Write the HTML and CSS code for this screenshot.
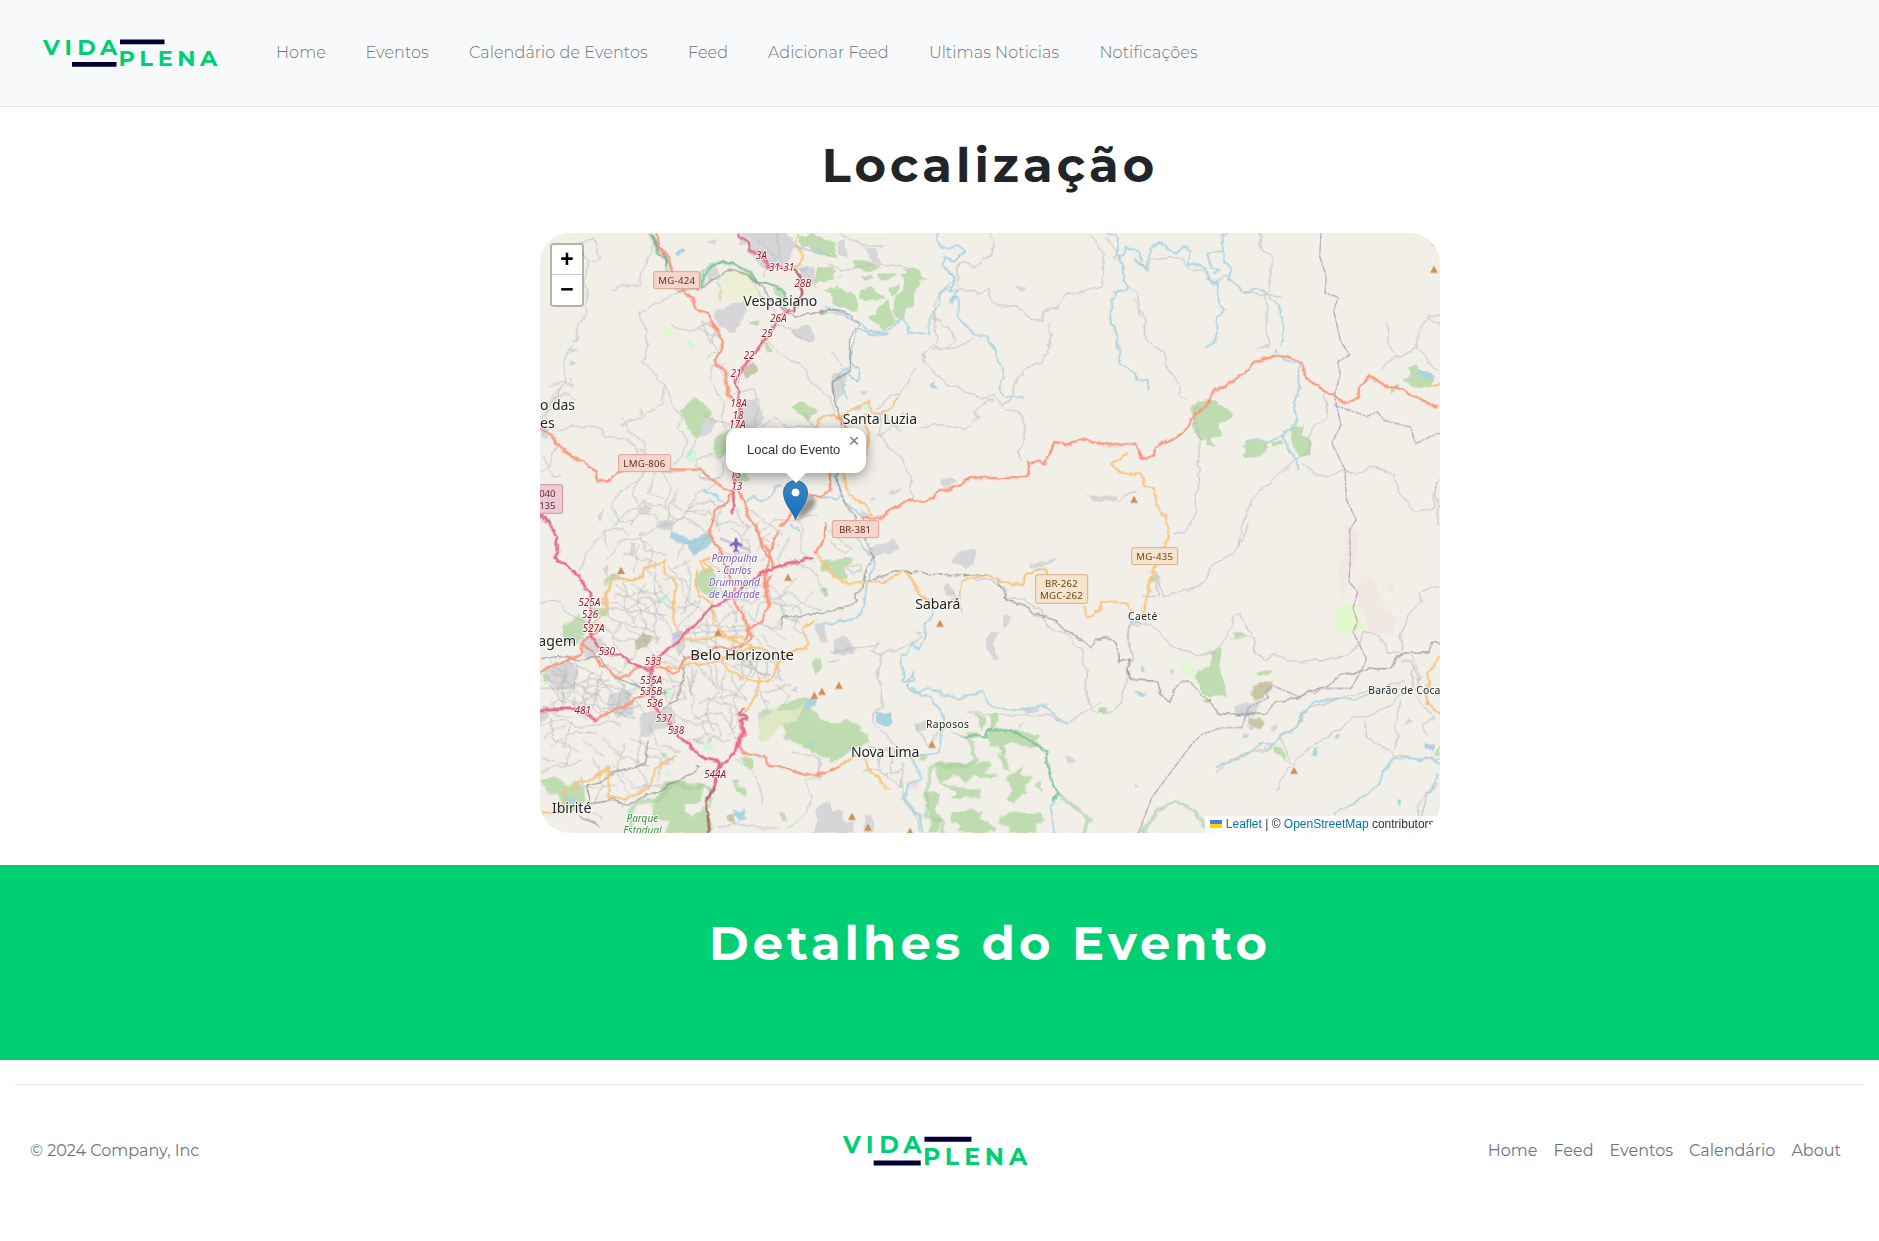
FILE: index.html
```html
<!DOCTYPE html>
<html lang="pt-BR">
<head>
<meta charset="utf-8">
<title>Vida Plena - Evento</title>
<link rel="stylesheet" href="styles.css">
</head>
<body>
<header class="topbar">
  <a class="brand" href="#" aria-label="Vida Plena">
    <svg class="logo" viewBox="0 0 175 28">
      <text y="16.3" x="0 21.5 34.2 57">VIDA</text>
      <text y="27.2" x="75.600 96.200 114.700 134.200 157">PLENA</text>
      <path d="M77 .5h44.500v4.700H77zM29 23h44.500v4.700H29z"/>
    </svg>
  </a>
  <nav class="menu">
    <a class="w-home" href="#">Home</a>
    <a class="w-eventos" href="#">Eventos</a>
    <a class="w-calendar" href="#">Calendário de Eventos</a>
    <a class="w-feed" href="#">Feed</a>
    <a class="w-add" href="#">Adicionar Feed</a>
    <a class="w-news" href="#">Ultimas Noticias</a>
    <a class="w-notif" href="#">Notificações</a>
  </nav>
</header>

<main>
  <section class="location">
    <h1 class="title title-location">Localização</h1>
    <div class="map">
      <svg class="tiles" viewBox="30 24 2700 1800">
        <defs>
          <symbol id="peak" viewBox="0 0 24 22"><path d="M12 0L24 22H0z" fill="#d08f55"/></symbol>
          <filter id="wiggle" filterUnits="userSpaceOnUse" x="0" y="0" width="2760" height="1850" color-interpolation-filters="sRGB">
            <feTurbulence type="fractalNoise" baseFrequency=".022" numOctaves="3" seed="4"/>
            <feDisplacementMap in="SourceGraphic" scale="26" xChannelSelector="R" yChannelSelector="G"/>
          </filter>
        </defs>
        <rect x="30" y="24" width="2700" height="1800" fill="#f2efe9"/>

        <g filter="url(#wiggle)">
        <!-- land use -->
        <g class="res">
          <path d="M640 24h130l20 30-8 40-40 40-60-20-30-50-30-5zM565 255l40-20 37-5-2 50-25 38-50-5-12-35zM533 140l25-14 4 26-16 26-14-10zM535 50l25-8-8 20zM780 310l50-5 25 30-10 15-55-25zM640 530l40-8 20 60-20 20 10 40-55-10-10-50zM505 600l40-25 12 20-20 35-30 6zM320 845l30-10 20 8-15 22-30-3zM206 860l12-12-4 45-12-10zM380 895l50-15v30l-40 12zM810 120l40 10 8 40-30 5-20-20zM40 600l25 10-10 30-20-4zM925 895v5l-20 5zM905 445l25 0 12 50-20 40-18-40z"/>
          <g transform="translate(900 0)"><path d="M20 440l40-10-10 22-10 50-18-20zM105 65l30 5 20 45-30-5zM20 55l24-12 10 55-25-5zM335 765l30-8 14 8-15 20-28-3zM760 802l20 8 20-2 30 2 30 6-4 10-40 0-20 4zM555 182l30 2-6 12-16 0zM90 855l40 15-35 18zM176 796l34-4v10l-34 6zM88 500l22-4-8 18zM120 816h14v8h-14zM70 545l24-10-2 18-18 8z"/></g>
          <g transform="translate(0 900)"><path d="M340 565l90-20 8 55-60 10-20 30-32-8 10-40zM240 505l60-5 12 65-50 20-32-30zM60 430l60-20 25 30-10 50-50 5-30-30zM150 340l70-5 10 30-50 40-30-30zM860 300l30-5v60l-25-5zM690 560l35-8 20 20-25 30-30-10zM300 55l18 0v35l-18 5zM690 530l24-6 4 16zM30 550l30-5-10 30-20 20zM860 850l40-20v94h-50zM780 490l25-10 5 20zM410 690l24 10-14 20-12-6zM430 340l30-10 10 40-30 30zM750 630l30 0-10 20zM215 130l20-8 0 40zM600 1500z"/></g>
          <g transform="translate(900 900)"><path d="M110 75l50-20 40-12 4 26-30 20-20 0-36 5zM365 100l35-25 32-5-2 40-16 24-14-18-34-2zM595 120l30-8 24 2 30-14-2 12-40 18-38-2zM343 185l12-15 15 20-2 30-26-12zM520 275l12-8 8 10-6 30-16 4zM470 350l20-30 18 0-16 34-4 24 18 20-20 6-14-26zM10 345l30-15 24 34 8 16-30 10-30-10zM250 595l40-12 2 38-40-2zM250 312l30 10-14 8zM711 698l12-4 18 12-10 10-18-6zM580 555l50-12-2 12-40 16zM565 605l14-8-4 16zM0 855l30 2 20 30 20-4 0 41h-70zM105 870l20 0 6 54h-28z"/></g>
          <g transform="translate(1815 900)"><path d="M300 540l40-12 28 2-4 40-20 6-48-6zM835 460l30-10-16 22zM102 436l16 0-4 16-12-6zM408 605l20-5-6 14-12 0zM820 570l12 20-20 6zM0 775l10 10-10 6z"/></g>
        </g>
        <g class="wood">
          <path d="M450 560l50-45 20 15 24 40-30 30-10 40-24-10-16-30zM800 24l25 14 20-14 30 10 40 20v40l-50-4-30-20-20 4zM776 548l36-20 50 28-22 28zM860 130l50-10v50l-40-6-20 20zM880 190l40-5v30zM658 295l16-8 20 6-10 8-20 0zM700 350l14 8 20 24-20 4zM560 640l25-20 20-8 0 60-36 30-20-30zM865 260l30-6 5 8-20 4zM330 552l8 12-10 6zM615 750l36-10 10 20-40 10z"/>
          <g transform="translate(900 0)"><path d="M65 110l50-4 36 20-24 12-60-4zM145 148l50 0-14 20-34-4zM215 130l40-4 36 35-20 0-10 36-10 60-20-4-16 32-28-20 14-56 20-18-16-40 26-4-8-10zM140 245l32-20 12 44 14 10-34 42-50-42 28-10zM90 190l40 0 36 34-40 0-18 4-26-14zM4 200l30-6 20 16 10-14 12 30 4 34-36-10-36-10zM0 58l20 16 0 30-20-10zM0 134l16 4-10 16-6 0zM25 160l12-6-6 12zM180 190l24-10 4 14-16 22zM95 150l30 0 8 12-24 4z"/></g>
          <g transform="translate(1815 0)"><path d="M190 525l30-5 24 0 10 22 40 20-6 14-30 24-6 30-24 10 14 18-24 0-4-16-20 2-24-40 10-20-12-30zM320 660l40-20 30 14 4 20-20 22-40 4-12-10 16-20zM405 655l35-10 4 8-36 14zM460 605l24-10 24 6-10 26 28 14 0 50-34 0-24-30zM792 460l34-6-8-24 20-6 20 14 30 10 12 20-14 18-34 4-30-18zM765 490l26-12-2 14-20 12z"/></g>
          <g transform="translate(0 900)"><path d="M690 560l40 0 30-24 40-10 60-10-20 30 40 40 50 20v90l-80-8-10-20-40-16-30-10-14-40-40-10zM400 770l60-5 60 20-10 50-40-4-10 30 30 20 30-40 20 30 6 53h-144l20-30-50-10-10-40zM100 300l50-30 20 20-10 40-20 30-38-10zM220 170l40-25 14 20-54 20zM500 150l20-20 30 2 10 60-20 30-30-20-12-30zM870 110l30-5v40l-24-8zM870 190l20-4 10 30-16 4zM30 760l50-10 24 30 34-10 24 20-4 40-26 30-30-14-22-40-30-4zM630 695l30 8 4 30-12 4zM845 410l30-8 10 30-30 14zM610 765l20-4-10 20 24 4-4 22-22-12zM390 690l20-4-4 20zM740 860l20 6 10 20-20 4zM40 450l20-10v30h-20zM180 250l60-6-10 30-40-4z"/></g>
          <g transform="translate(900 900)"><path d="M0 110l40-10 28-6-4 26-20 10 8 30-36-4-16-14zM0 596l40-10 40 10 34 40 0 20-40 4-40 44-34 6zM812 550l14-6 8 14-12 14-14-4zM130 560l30 8 24 14-20 0z"/>
            <path d="M435 570l30 8 0 20-10 20zM478 570l24-6 0 44-12 14zM470 620l70-6 90 10-20 20 20 16-30 10-40-16-34 4 6 30-12 16-14-40-30-4zM305 715l60-4 40 10 40-16-10 20 36-14 20 14-30 16 40 10-20 10-50-14-20 30-40-26-34 24zM320 770l60 14 40 10 34-4-4 40-40-20-50 14 20-24zM500 680l30 24 10 40-20-20zM520 770l40-34 20-20-10 36 40 10-24 20 10 20-26 4-20 30-20-10 20-36zM370 860l50-6 40 4-10 20 30 14 20 22-10 8h-110l10-22-30-14zM510 870l60-14 40 8 24-4 6 30-24 6 0 28h-80l-6-20-24-10zM288 800l24-4 20 20-20 30 20 24-8 54h-24l6-40-18-34zM610 780l24-10-4 30zM270 680l20 10-6 24-16-10zM410 620l40 4 0 20-28-4z"/></g>
          <g transform="translate(1815 900)"><path d="M225 380l30-14 8 8-6 50 4 40 14 50-50 0-20-14-4-20-24-24 16-20 30-8zM365 440l34-14 12 8-14 14-30 0zM418 668l16 0 22 34-14-2-22-20zM900 690l15-30v30zM300 325l20-6 10 14-26 4zM45 155l14-4 4 20-14 6zM30 195l14-6 10 10z"/></g>
        </g>
        <g fill="#e0f9cc"><path d="M2413 1165l25-25 30-4 10 30 28 34-20 16-26 2-12 20-30-30zM1950 1328l20-6 20-20-4 26 20 10-16 16-28-4zM1955 1310l25 5-20 10zM400 305l26 0 8 26-30 0zM1000 538l24-6-2 20-18 6z"/></g>
        <g fill="#eef0d5"><path d="M575 150l50-14 40 26 24 50-60 16-30-10-50 4-6-20 26-14zM1010 34l50 4-16 10z"/></g>
        <path fill="#dfe8c4" d="M682 1500l50-50 50 10 36-18-20 50-50 10-30 40-30 4z"/>
        <g fill="#c8c5a8"><path d="M632 440l30-26 20 20-30 24zM315 1250l24-30 22 14-20 36-24 4zM2165 1390l30-18 30 0-4 30-40 24-20-16zM2155 1480l40-2 12 24-20 14-30-20zM2020 1425l24-4-10 14zM590 1770l24 0-4 30-20-4z"/></g>
        <g fill="#d3f5dc"><path d="M470 680l30-6 6 30-24 10-16-20zM380 1110l24-6 4 24-20 4zM750 1140l20-6 4 28-26 6zM515 1545l30 10 10 14-34 6zM400 1640l18-4v20l-14-2zM470 345l20 20-4 10-14-8zM994 540l24-8-4 26-16-4zM370 870l20 8-6 20-16-8zM520 885l16 0 0 16-16-4zM400 1390l24 4 6 24-24 4zM600 1100l10 0 4 14-12 0zM250 880l10 16-14 8zM650 1080l12 4-4 10z"/></g>
        <g fill="#f2e8e3"><path d="M2450 900l40 20-14 90-40 120-8-100zM2490 1050l50 20 20 90 40 10-10 60-70-10-20-60-20-20zM2550 1070l50 10-20 30z"/></g>
        <g fill="#ecdfea"><path d="M1130 1665l36 4-6 20-34 6zM920 1158l20-4-6 16zM780 1182l24 2-16 16z"/></g>

        <!-- lakes -->
        <g fill="#aad3df">
          <path d="M420 912l34 18 24 16 30-6 26-20 10 34-24 20-20 4-16 14-10-30-34-14-18-10zM828 1426l28-10 2 24-26 16-8-10zM832 1550l28-4-14 16zM612 1756l20 4 12-12-4 26 10 6-20 10-16-16zM440 80l20-10 4 12-20 10zM815 130l20 0-6 16zM125 370l14 4-8 10zM126 404l10 10-4 8zM1036 1460l30 8 20-4-8 20 8 12-14 12-30-14zM2666 440l30 0 18 20 0 6-24-10-30-0zM2685 1555l30-4-2 24-26-2zM2350 1575l16-8-6 26-14-2zM2416 1530l10-4-2 14-8 2zM2130 1458l34-2 0 8-34 2zM2602 1725l10-4 0 22-8-4zM1838 1320l10 10 0 12-8-2zM1820 1395l22 14 4 10-24-10zM100 1710l30 10 10 16-20 0zM2140 1530l10-4 0 6-8 4zM2152 1500l24 6-14 6zM1203 476l10-6 4 14 10 4-14 4zM1208 365l14-4 0 8z"/>
        </g>

        <!-- city streets -->
        <g class="street">
          <path d="M160 80l10 30-6 80 10 60-30 50-10 50-30 60 0 60-40 50-20 60M60 490l30-20 40 10-10-20M370 60l-10 30-25 50-5 40-30 5-20-5-35 15M330 265l15 40 8 50-18 50 40 40 30 35-8 60-50 30-50 20-30 10M440 205l-60 30-50 30M425 295l40 20 30 0 40-20 20 20-10 40M80 615l60-10 70 0 10 30 70 10 30 30 20 5M280 580l20 40 40 30 10 80-30 40-40 20M405 480l30 60 20 40-10 30 25 30-15 60-30 20M590 420l-40 0-10 40 40 70-10 40 20 40M600 520l30-20 40-10 20 50-20 60M700 340l60 50 70 40 10 40 60 50 20 60M570 235l-5-80M670 180l40 60 20 20M300 640l30 60 70 40 60 0M340 735l-30 70 10 30M380 745l-30 60 50 10M500 720l10-25 40-10 30 30-10 50-60 0zM30 750l30-30 20-60M520 740l40 40-60 30-40 70-70 30M540 820l30 40-10 40M440 790l-20 60-10 50M400 740l20 40-10 70M640 850l60 30 60 50M830 560l20 50 40 20M150 50l40-8 12 58-24 8M270 790l-20 50 20 50 40 0M480 860l40 10 20-20"/>
          <path d="M250 910l40-50 50-30 60 10 30 40 50 10 50 30M300 900l30-40 40 10 10 40M430 830l40 30 50-10 30 20 20 50M440 890l60-60 50 0M560 900l50-10 40 20 40-20M620 850l30 60-20 60M690 920l50-40 60 10 60-20M790 880l30 30-10 60 40 40M500 640l-30 60M520 560l30 30 60 10M690 600l40-20 50 30 60-10M640 600l50 30M620 500l10-70M720 300l60 10 60 40M740 20l10 80 60 30 50 60M860 70l50 30M680 40l60 60M700 150l40-60M520 290l40 90-30 20M510 310l60 30M50 530l60-30 20 20M30 580l40-30 20-60M40 690l30 60 20 0"/>
          <g transform="translate(0 900)"><path d="M30 230l60 0 30 40 50 20M230 60l-10-40 60-10 20 20M230 100l40-50 60-10 40 30-10 60-40 30M240 230l60 20 40-30 60 10 40 30M250 150l-30 80 30 60 60 10 60 20M280 170l10 80 30 50M340 180l-20 60 30 60-10 60 30 30M380 110l-10 60 20 70-20 60 10 50M270 290l-20 60 20 30M250 210l150-10M240 250l170 20M400 170l60-10 20 30M440 250l60-20M470 300l190 4M480 325l170-10M500 290l-10 60M530 285l0 70M570 290l-10 90M610 295l0 90M460 110l20 40 0 60-30 60M430 130l50-20M640 120l10 80 40 30M600 220l60 10 30-10M650 190l60-10M720 100l-10 50 10 60M740 130l60-20 60 40 30 60M730 220l40-20 60 40 40 10M670 290l20-50 60-10 20 50 40 20M720 310l40-40M700 330l30 40 20 70-20 30M610 370l40 50 60 30M600 400l30-30 60 90M640 370l-10 90M670 360l-20 100M700 370l-40 90M720 380l-20 80M610 430l120-40M590 400l140 10M560 420l0 60 60 30M470 450l20 60-10 50 40 30 20 60M500 440l-20 70M520 440l40 50-30 80 20 50M580 440l-10 70 40 60-10 40M600 450l50 80M650 470l-40 60 20 70M30 450l60-40 60 10 60 40 40 50M60 400l40 60-20 60 60 20 70-40M30 490l80 0 70-30 60 10M50 430l30 90-20 40 60 20M100 420l0 120M140 410l-10 130 40 40M70 440l110 90M90 530l100-90M180 440l-20 100M210 440l-20 110 40 30M30 600l60-20 60 30 70-20 50 10M40 640l60-40M60 580l10 60 50 30-10 50-80 20M120 590l-20 80 50 10M280 480l-30 100M310 490l-40 90M250 520l70 60M240 540l80-40M400 500l60-20 0 40-40 20zM380 460l90 20M410 440l30 60-30 50M440 580l60 20 60-10 10 40-40 20M430 610l20 30 70 10M280 660l-20 90 40 50-20 50M330 640l-10 80 30 60-30 20M350 690l50 20-20 60M190 700l30 80-20 50M250 720l70 70 70-10M150 760l30 60-10 40 50 20M170 790l90-10M740 480l40 30-20 30M700 500l80-20M750 240l60 10-20 60 40 20M620 700l60 60 20 80M870 740l-40 30 20 50-40 70-40 20M790 680l80 20-10 60M560 910l60-10 120 10M490 650l50-20 60 20M640 640l-30 50M690 110l30-20M780 40l-40 60 20 30M440 100l20-40 40-10M410 90l-60-10-20-50 60-20M560 70l40 20 60-10M540 110l60 60 20 0M600 60l30 50M660 60l0 60"/>
            <path d="M220 260l80 60 90 20M200 290l60 50 80 10M300 170l70 60 60 100M420 200l-120 90M260 180l140 110M350 130l80 110M420 120l60 110 60 50M510 230l-80 90M540 200l20 90M570 180l50 110M640 240l-80 60M590 300l60 60M480 350l90 20M490 290l80 70M630 250l60 50 60 10M700 200l70 60M660 310l70 90 30 70M690 290l80 60M580 380l100 60 60 10M600 360l120 110M570 400l80 60M530 400l20 80M490 400l30 50M450 380l40 70-10 60M380 380l60 30M390 410l80 20M300 400l-40 60 20 30M330 360l-50 60M220 420l60 20 60 60M200 470l100 40 50 60M170 500l80 40 80 10M160 480l60 80 100 20M40 470l90 60 100 20M60 540l80-60 100 10M340 460l-60 50M540 520l80 30 30 40M500 540l70-30 80 10M490 580l90-20M580 560l40 80M650 560l-60 70M690 500l20 60M360 600l30 60 60 20M300 640l90 40M220 640l60 60 80 20M160 640l60 60M60 660l80-40 60 10M40 700l80 20 40-20M230 20l-60 60-20 60M280 90l100 20M330 60l-20 80M690 40l60 20M720 180l50 60M800 160l-60 60M850 200l-60 60M550 20l-60 60M600 10l60 50M720 20l-40 60"/></g>
        </g>
        <g class="minor">
          <g transform="translate(900 0)"><path d="M475 24l14 30-4 40-26 6-20 24-10 0-48-4 4 30 6 40 50 14 34-10 14 30 28 20 40-6 24 30 50 26 14-36 24-10 14 4 30-50 50 0 50-20 8-36-4-40 6-20-40-60M652 298l18 30-20 60-18 26-36 10-30 30-20 50-8 30-24 8-30-24-40-6-36-10-30-20-30-6-30-30-40-40 4-24 34-32 4-50-10-60 40-60 40-30M262 428l-20 20-6 30-24 24-30 10-40 40M310 275l50 30 10 40-10 20M305 372l60 2 64-34M530 550l40 10 14 40-6 60-14 20 4 28M272 610l60-10 70 16 44-36-10-20 40-36 10 8M0 114l30 20 50 0 40-20 60 6 60 4M160 560l-10 70 50 60 14 20 30 50 0 60M140 630l20-4 60-60M160 560l50 60M30 30l80 30 50 0M860 110l0-30-30-40M0 380l36 40M0 260l30 10M880 110l4 60 40 40 0 60M860 830l60-30"/></g>
          <g transform="translate(1815 0)"><path d="M0 225l26 60 4 60 20 4 34 30 16 60 30 40 4 30 20 20M0 95l40 40 10-30 80-10 30 30 50 20 20 35 40-30 50 50 70 10 18-20-14-20 20-50-4-30-30-20-10-50 20-20M385 205l56 4M390 210l4 90 8 65-40 8M185 530l-4 60 14 60-6 60 4 60-14 40 4 60-34 44-30 10M575 490l-6 40 8 40-40 40-14 30 0 40-40 20-60 60-60 40-30 60-20 70-6 40M500 710l30 30 60 16 30-14 60 4 40-20 60 20 10 50 30 40 20 20 50-8 20-90M740 440l34-38 74-28 0-40 26-56 40-8M848 374l60 60M755 295l4 50 16 40M900 770l10 130M875 282l40 22M890 60l20 2"/></g>
          <g transform="translate(900 900)"><path d="M0 380l60-10 70-10 14-10-20 30 30 14 60-30 60-30M155 395l-10 70 14 80-30 20 0 30 60 60 20 20M0 414l30-16M430 170l60-4 40 30-10 20 60 10 50 30 20 40 60 34 40 40 18 60 4 100 20 30 40 6 40-30 20-80 10-60-4-60 10-50M810 530l-40 30-64 34-40-20-100 0-160-10M930 300l-30 10 4 100M250 595l10 30 40 30 40-40 0-20M110 665l80 10 60 0 30 14M100 740l40-10 20 30 50-30M150 690l0 60 60 34 4-40M190 680l-10 70M60 665l10 30M215 720l0 80 50 80 4 44M0 50l40 30 20-10M60 130l30-10 0 20-20 10-20-20zM395 260l-30-60M0 10l60 60"/></g>
          <g transform="translate(1815 900)"><path d="M340 0l-20 46-36 44-54 36-20 50-60 20-66 18-6-20-20-54M0 290l50 10 50 50 30 20 50 24 60-20 50-60 4-34 20-10 20 30 14 30M350 340l-60 0M352 340l10 40 30 20 30-14 70 30 50-10 90-10 50-50 0-30 40 10 30 34 10 20 40 10 30 0 20 60M915 184l-60 16 4 40-44 34-20 60 10 50M240 750l50-50 60-20 60-10 30-40 50-20 10-50 100-36 70-20 80-20 60-20M425 800l40-80 60-50 70-50 60-40 60-14 60-30 50-50 10-60M690 590l4 50 70 40 20 20 140 0M840 520l60 60-40 20 20 30M800 530l-20 60 14 40-20 40M436 640l30 70M845 924l4-90 60-60M790 410l40 0 20 50-20 40M20 216l40-6M60 140l10 70"/></g>
        </g>

        <!-- rivers -->
        <g class="river">
          <path d="M890 244l40 20 60 30 30 30 40 4M640 835l30-20 20 14 30-14 10-30 24 4M820 820l50-10 40 10M525 796l50 30"/>
          <g transform="translate(900 0)"><path d="M322 24l-4 24 20 16 50 0 18 10-34 38-30-18-4 30 36 30-6 30-10 18 30-4-24 30 20-10 0 60 30 30 20 20 44 6 20 60 16 40 10 20-14 40 4 20 30 6 30 0M355 190l-24 10 0 40-30 30 0 44-4 18-60-10-20-40-20 4-24 40-50-10-44 2-6 40-10 60 24 20-4 26-24-14-6-20-20 0-6 20 10 30 14 40M830 24l30 14 0 50 14 10 14 90-30 20-16 20 6 60 10 50 16 40-8 44 30 10 30 30M870 100l16-30 40 10 10 26M0 820l20 0 10-30-20-40M20 750l10 60 20 30 50 40"/></g>
          <g transform="translate(1815 0)"><path d="M0 100l36 34 10-70 30-10 50 30 20-20 22 20-10 34 20-6 30 24 10 34 30 6 4 60 14 20-16 30-6 50-26 30M282 24l-20 10-6 34-40 20 14 40 26 10-20 14M258 70l10 40 26 20-18 30 50 40 60-10 20 24 30 40 8 40-4 60M425 372l20 30 46 16-2 50 10 20-26 50 14 44-20 20-20 30 10 40 30 30-4 30M445 630l-50 24-30-14-30 10M0 465l40-6 4 32"/></g>
          <g transform="translate(900 900)"><path d="M60 20l70 80-10 60-10 20-10 80-20 20-80 16M310 255l-20 40-6 40-20 34-20-20-10 40-20 0 4 80 20-4 6-20 10 16-20 14 20 30 30-10 50 10 60 16 30-14 36-8 14 30 50 24 60 4 50-20 50 40 24 10M250 486l10 16 40 20 30 30 14 50-20 80-60 8-20 10 20 30 4 30-36 20-10 40 20 30 30 20 4 54M365 618l40 14M670 820l-4 60 10 44M930 290l-24 10"/></g>
          <g transform="translate(1815 900)"><path d="M245 730l60-30 40-16 30-24 40 4 20-34 50-20 10-40 50-40 60-10 60 4 50-24 80-10M600 870l60-40 70-50 10-40 50-50 60 10 40-4 25 24M850 924l10-60 20-60 30-60M870 480l10 60M520 924l40-30"/></g>
          <path d="M900 1190l-20 10M780 900l30 20"/>
        </g>
        <path class="park-edge soft" d="M360 24l25 60 30 10 20 100 60-10 30-50 20-16 40-4 50 16 40 40 60 10 20 40 0 30M300 1824l0-50 20-40 60-10 50-50 60 10 50 10 0 50M1310 1535l16 20 8 50-24 22-90-10-20 24-10 80-4 50 50 20-4 50M1590 1715l60 40 30 30-20 50M1835 1824l50-70 50-24 60 30 20 40 30 24"/>
        <path class="park-edge" d="M1310 1535l30-4 30 4 10-20 60 0 30 14 40 24 40 34 14 80 24 40-20 20M510 180l25-45 20-16 40-4 50 16 40 40 60 10 20 40 0 30M366 30l25 60 20 20"/>

        <!-- railways and limits -->
        <g class="rail"><path d="M362 24l10 30 30 30 10 60 30 60 50-10 60-30 40-28 60 14 40 30 40 60 60 30 50 0 60-20 60 20 24 30-30 40 10 50-10 50-50 30 4 40 20 60 0 50 10 40-20 110 20 60 40 60 30 60 20 20 0 30-24 30-8 60-24 20 4 20-40 20-60 10-50-0-30 20-40-10-10 30M30 1300l60-8 60 14 60-12 20 40 40 30 60 20 20 20 60 0M180 1740l-10-60 40-10 40-30 50-10 50-20 0-60M186 1736l60-10 50 14 200-100 10-20-14 0M460 1300l0 70-20 60-40 20M1010 1072l80-36 60 8M1300 1055l40-4 60 6 24 50 0 14 60 24 40 24 60 20 20 30 50 20 30 30 20-30 30 0 24 20 4 50 30-4 4 50 20 10 70 4 10 40 30 20 0-34 30-24 40 14 40 40 30 40 50 4 90-6 30-30 50-14 40-10 60-24 60-40 80-14 60 0 10-30 50-20 50-0 14-30 30 10M150 1770l60 30"/>
          <path stroke-dasharray="16 8" d="M1130 1040l180 12"/></g>

        <!-- secondary, primary and motorway roads -->
        <g class="orange">
          <path d="M800 24l-10 30 30 40-8 20-20 6M853 608l20-30 40-10 20 14 40-34 50-20 0 30 30 10 40-30 16-24M1000 570l16 50 0 60-30 20-50 0 4 60 20 50 50 30 20 30M100 1700l80-40 60-30-5 40 0 50 60 0 60-30 20-50 50-40 10-10M30 1760l60-4 20-30-10-30M405 1005l0 40 30 40-6 100 30 60 70 0 40-14 70 6 30 30 20 0M400 1010l-50 20-20 30-80 0-20 50-4 40-40 60-10 30M525 1010l20 20-20 10-10-30 25-10M500 1040l0 50 10 30 40 20 0 60 50 40 40 20M380 1330l100-10 70-10 60-20 60-20 40 0M575 1310l20 30 60 30 60 0 20-40 30-40 60-20 0-60 30-20M690 1360l-10 50-40 60M864 980l6 30 40 40 50 24 60 0 60-14 40-20 30 20 10 50 40 24M1255 1140l30-20 10-50 60-14 40-0 44 24 34 0 10-24 30-20 30 0 30 30M1660 1140l10 30 20 6 20-20 4-30 80 10 14 20M1080 1690q-40-10-64-70t-56-14q-30 30-60 24M1786 685l-40 30 20 20 30 14 30 0 20 34 30 4 14 60 20 30 10 60-30 40-20 60-20 70-4 60M2730 1290l-34 60-6 90 30 20 10 4M2690 490l44-8"/>
        </g>
        <g class="trunk">
          <path d="M376 24l10 40 30 30 12 50 20 40 40 40 10 24 36 20 20 50 26 30-26 60 34 40 4 60 20 30M30 610l40 20 30 50 100 60 10 30 30-4 34-30M420 733l90 2 20 20 80 50 20-10 10 40 20 50 60 100 10 50M610 810l-50 40-20 60 0 30 30 30 40 120 10 60 40 60M680 900l20 70 16 40-10 50 14 80-20 50-40 20-10 34M740 920l-24 80M750 900l50-50 20-30M900 740l0 50-30 24-40-4M30 1340l60-24 60-30 0-20 60-60M150 1260l40 20 20 40 60 40 60-30 60-10 40 26 30-40 40-16 60-20 50 0 40-14M200 1480l150-70M625 1560l20 30 60 0 20 30 60 10 40 20 60-10 40-10M890 900l-10 50-20 30M630 1500l16 30-20 10M650 1210l20 20-10 20M720 1055l-14 60"/>
          <g transform="translate(900 0)"><path d="M24 582l40 50M100 880l56-2 24-20 60-34 40 10 34-10 14-32 40 0 40-26 40-6 130 0 18-20 0-26 34-4 16 8 26-60 30-4 10 4 36-14 50 10 40 8 50-4 30 0 18 34 14 10 24-4 4-34 36-20 40-20 60-70 20-20 18-40 38-14 30-28 30-10 16-26 30-14 40-10 34 0 40 20 20 46 60 40 24 20 34 14 30-14 14-40 30-24 30 14 20 14 40 14 40 20 20 0 30 24 20 4"/></g>
        </g>
        <g class="motorway">
          <path d="M625 24l35 44 40 30 20 24 60 8M780 252l-34 22-30 60-54 60-30 46-20 20 0 20 14 30 4 50-8 60-10 180-4 60M30 860l50 70 0 70 10 14 60 40 26 50 4 50 0 70 50 60 40 6 30 24 60 20 50-60 60-50 80-80 60-30 50-50 40-20 60-30 90-16M370 1300l-6 100 0 40 40 40 40 50 30 30 50 40 40 10 10 20 50-60 16-70-10-10 24-6-26-16 10-16M30 1460l20-8 100 0 50 30M572 1620l-20 40 0 30"/>
          <path class="dark" d="M552 1690l-26 40 10 94M790 130l20 30 0 50-20 44"/>
        </g>
        </g>
        <g class="limit"><path d="M2373 24l-4 70 20 60-4 50 40 12-14 40 20 90 28 44-36 20 8 40-18 60 20 90-28 54 40 80 4 90 30 60-20 30 2 80-4 76 26 30-14 50 14 40-14 30 40 80-6 20-40 70-90 0-20 16-14-10-30 20-80-34-24 16 10 20-60 30-20 60-60 0-60 20-30 30-120 160-60 160M2412 540l100 34 30-14 20 26 80 20 14 50 64-30 10 0"/></g>

        <!-- airport, peaks, shields -->
        <path fill="#c9c4de" d="M570 936l90 34-4 8-88-34zM430 1225l30-10-10 24-24 6zM790 60l90 24-2 5-90-24z"/>
        <path fill="#8461c4" d="M618 936q5 4 5 14l14 9v5l-14-4-2 13 6 5v3l-9-2-9 2v-3l6-5-2-13-14 4v-5l14-9q0-10 5-14z"/>
        <g>
          <use href="#peak" x="261" y="1025" width="24" height="22"/><use href="#peak" x="762" y="1046" width="24" height="22"/>
          <use href="#peak" x="552" y="1211" width="24" height="22"/><use href="#peak" x="841" y="1400" width="24" height="22"/>
          <use href="#peak" x="864" y="1388" width="24" height="22"/><use href="#peak" x="915" y="1370" width="24" height="22"/>
          <use href="#peak" x="1218" y="1184" width="24" height="22"/><use href="#peak" x="1194" y="1547" width="24" height="22"/>
          <use href="#peak" x="954" y="1763" width="24" height="22"/><use href="#peak" x="1002" y="1796" width="24" height="22"/>
          <use href="#peak" x="1128" y="1808" width="24" height="22"/><use href="#peak" x="1800" y="812" width="24" height="22"/>
          <use href="#peak" x="2280" y="1625" width="24" height="22"/><use href="#peak" x="2700" y="122" width="24" height="22"/>
        </g>
        <g class="shield pink">
          <rect x="371" y="140" width="138" height="51" rx="5"/><rect x="266" y="689" width="156" height="51" rx="5"/><rect x="907" y="887" width="139" height="51" rx="5"/>
          <text x="440" y="176" textLength="110">MG-424</text><text x="343" y="726" textLength="126">LMG-806</text><text x="975" y="923" textLength="96">BR-381</text>
        </g>
        <g class="shield rose"><rect x="-30" y="779" width="128" height="86" rx="5"/><text x="52" y="817" textLength="49">040</text><text x="52" y="853" textLength="49">135</text></g>
        <g class="shield sand">
          <rect x="1517" y="1049" width="156" height="86" rx="5"/><rect x="1805" y="968" width="138" height="51" rx="5"/>
          <text x="1594" y="1086" textLength="98">BR-262</text><text x="1594" y="1121" textLength="128">MGC-262</text><text x="1874" y="1006" textLength="110">MG-435</text>
        </g>
        <g class="exit">
          <text x="694" y="102">3A</text><text x="755" y="138">31-31</text><text x="818" y="186">28B</text><text x="745" y="290">26A</text><text x="711" y="336">25</text><text x="657" y="402">22</text><text x="618" y="456">21</text><text x="626" y="546">18A</text><text x="624" y="583">18</text><text x="622" y="610">17A</text><text x="617" y="760">13</text><text x="620" y="795">13</text>
          <text x="178" y="1142">525A</text><text x="180" y="1180">526</text><text x="191" y="1220">527A</text><text x="230" y="1290">530</text><text x="369" y="1320">533</text><text x="363" y="1377">535A</text><text x="363" y="1409">535B</text><text x="374" y="1445">536</text><text x="402" y="1491">537</text><text x="438" y="1528">538</text><text x="158" y="1467">481</text><text x="555" y="1660">544A</text>
        </g>
        <g class="place big">
          <text x="640" y="243" textLength="222">Vespasiano</text><text x="938" y="597" textLength="223">Santa Luzia</text><text x="30" y="556" textLength="105">o das</text><text x="30" y="610" textLength="44">es</text><text x="25" y="1262" textLength="113">agem</text><text x="481" y="1304" textLength="311" lengthAdjust="spacingAndGlyphs">Belo Horizonte</text><text x="66" y="1764" textLength="118">Ibirité</text><text x="1156" y="1153" textLength="135">Sabará</text><text x="963" y="1596" textLength="205">Nova Lima</text>
        </g>
        <g class="place small"><text x="1188" y="1508" textLength="129">Raposos</text><text x="1794" y="1184" textLength="88">Caeté</text><text x="2515" y="1406" textLength="240">Barão de Cocais</text></g>
        <g class="place airport"><text x="613" y="1012">Pampulha</text><text x="613" y="1047">- Carlos</text><text x="613" y="1084">Drummond</text><text x="613" y="1119">de Andrade</text></g>
        <g class="place park"><text x="337" y="1792">Parque</text><text x="337" y="1826">Estadual</text></g>
      </svg>

      <div class="zoom"><a href="#">+</a><a href="#">−</a></div>

      <svg class="marker" viewBox="0 0 50 44">
        <defs>
          <linearGradient id="pin" x1="0" y1="0" x2="0" y2="1"><stop offset="0" stop-color="#3a88c4"/><stop offset="1" stop-color="#126fc6"/></linearGradient>
          <filter id="soft"><feGaussianBlur stdDeviation="2"/></filter>
        </defs>
        <path d="M13 40Q17 24 26 18Q36 16 31 26Q25 35 13 40z" fill="#000" opacity=".4" filter="url(#soft)"/>
        <path d="M12.500 39.500C11 33 .5 24 .5 12.500a12 12 0 0 1 24 0C24.500 24 14 33 12.500 39.500z" fill="url(#pin)" stroke="#2e6c97"/>
        <circle cx="12.500" cy="12.500" r="4.400" fill="#fff" stroke="#2e6c97" stroke-width=".8"/>
      </svg>
      <div class="popup">Local do Evento<span class="close">×</span></div>

      <div class="credit">
        <svg class="flag" viewBox="0 0 12 8"><path fill="#4C7BE1" d="M0 0h12v4H0z"/><path fill="#FFD500" d="M0 4h12v4H0z"/></svg>
        <a href="#">Leaflet</a> | © <a href="#">OpenStreetMap</a> contributors
      </div>
    </div>
  </section>

  <section class="details"><h1 class="title title-details">Detalhes do Evento</h1></section>
</main>

<footer class="footer">
  <p class="copy">© 2024 Company, Inc</p>
  <a class="footer-brand" href="#" aria-label="Vida Plena">
    <svg class="logo" viewBox="0 0 175 28">
      <text y="16.3" x="0 21.5 34.2 57">VIDA</text>
      <text y="27.2" x="75.600 96.200 114.700 134.200 157">PLENA</text>
      <path d="M77 .5h44.500v4.700H77zM29 23h44.500v4.700H29z"/>
    </svg>
  </a>
  <nav class="footer-menu">
    <a href="#">Home</a><a href="#">Feed</a><a href="#">Eventos</a><a href="#">Calendário</a><a href="#">About</a>
  </nav>
</footer>
</body>
</html>
```
FILE: styles.css
```css
* { box-sizing: border-box; }
body { margin: 0; background: #fff; color: #212529; font: 400 16px/24px Montserrat, Inter, sans-serif; overflow: hidden; }
a { text-decoration: none; color: inherit; }

.logo { display: block; width: 100%; height: 100%; overflow: visible; }
.logo text { fill: #00ce72; font: 700 22.500px Montserrat, sans-serif; }
.logo path { fill: #000033; }

.topbar { display: flex; align-items: center; height: 107px; padding: 0 43px; background: #f8f9fa; border-bottom: 1px solid #dee2e6; }
.brand { width: 175px; height: 28px; margin-right: 58px; }
.menu { display: flex; gap: 40px; font-weight: 300; color: #727476; white-space: nowrap; }
.menu a { flex: none; letter-spacing: .1px; }
.w-home { width: 49.5px; }
.w-eventos { width: 63.5px; }
.w-calendar { width: 179px; }
.w-feed { width: 40px; }
.w-add { width: 121px; }
.w-news { width: 130.5px; }
.w-notif { width: 98px; }

.location { width: 900px; margin-left: 540px; padding: 28px 0 32px; }
.title { margin: 0; font-size: 48px; font-weight: 700; line-height: 60px; text-align: center; white-space: nowrap; }
.title-location { letter-spacing: 4px; margin-bottom: 38px; }

.map { position: relative; height: 600px; overflow: hidden; border-radius: 30px; font: 12px/1.5 "Liberation Sans", Arial, sans-serif; }
.tiles { display: block; width: 900px; height: 600px; fill: none; stroke-linejoin: round; stroke-linecap: round; font-family: "Noto Sans", sans-serif; }
.res { fill: #d6d5d7; }
.wood { fill: #bfdbb0; }
.street { stroke: #b3b3b7; stroke-width: 2.200; }
.minor { stroke: #b7b7ba; stroke-width: 2.600; }
.river { stroke: #a6d2e2; stroke-width: 5; }
.park-edge { stroke: #6fb893; stroke-width: 6; opacity: .85; }
.park-edge.soft { stroke: #a3cf9f; stroke-width: 11; opacity: .6; }
.rail { stroke: #777; stroke-width: 2.800; }
.limit { stroke: #bfa3bf; stroke-width: 4; stroke-dasharray: 18 6 4 6; }
.orange { stroke: #f7c27b; stroke-width: 6; }
.trunk { stroke: #f8967c; stroke-width: 7; }
.motorway { stroke: #e36b8b; stroke-width: 8; }
.motorway .dark { stroke: #b5666b; }

.shield rect { stroke-width: 3; }
.shield text { font-size: 29px; text-anchor: middle; }
.pink rect { fill: #f5d6cd; stroke: #e0a193; }
.pink text { fill: #6b2b1b; }
.rose rect { fill: #edcbd4; stroke: #cf93a6; }
.rose text { fill: #6d1c3a; }
.sand rect { fill: #f6e4cf; stroke: #d6b087; }
.sand text { fill: #6a4512; }

.exit text, .place text { paint-order: stroke; stroke: #fff; stroke-opacity: .75; stroke-width: 6; }
.exit { fill: #9b1c27; font-size: 30px; font-style: italic; text-anchor: middle; }
.big { fill: #222; font-size: 42px; }
.small { fill: #222; font-size: 31px; }
.airport, .park { font-size: 30px; font-style: italic; text-anchor: middle; }
.airport { fill: #7857b8; }
.park { fill: #3c9140; }

.zoom { position: absolute; left: 10px; top: 10px; width: 34px; border: 2px solid rgba(0,0,0,.25); border-radius: 4px; background-clip: padding-box; }
.zoom a { display: block; height: 30px; background: #fff; color: #000; font: bold 23px/29px "Liberation Sans", sans-serif; text-align: center; }
.zoom a:first-child { border-bottom: 1px solid #ccc; border-radius: 2px 2px 0 0; }
.zoom a:last-child { border-radius: 0 0 2px 2px; }

.marker { position: absolute; left: 243px; top: 247px; width: 50px; height: 44px; }
.popup { position: absolute; left: 186px; top: 195px; width: 140px; height: 45px; padding-left: 21px; background: #fff; border-radius: 12px; color: #333; font-size: 13px; line-height: 43px; white-space: nowrap; box-shadow: 0 3px 14px rgba(0,0,0,.4); }
.popup::after { content: ""; position: absolute; left: 59px; top: 44px; border: 11px solid transparent; border-top-color: #fff; border-bottom: 0; }
.close { position: absolute; right: 0; top: 0; width: 24px; height: 24px; color: #757575; font-size: 19px; line-height: 25px; text-align: center; }

.credit { position: absolute; right: 0; bottom: 0; width: 235px; height: 17px; padding-left: 5px; background: rgba(255,255,255,.8); color: #333; line-height: 16.800px; white-space: nowrap; }
.credit a { color: #0078a8; }
.flag { width: 12px; height: 8px; margin-right: .5px; }

.details { height: 195px; padding: 48px 0 0 101px; background: #00ce72; color: #fff; }
.title-details { letter-spacing: 4px; }

.footer { display: flex; align-items: center; height: 132px; margin: 24px 15px 0; padding: 0 23px 0 15px; border-top: 1px solid #dee2e6; color: #6c757d; }
.copy { flex: 1; margin: 0; white-space: nowrap; }
.footer-brand { width: 185px; height: 30px; }
.footer-menu { flex: 1; display: flex; justify-content: flex-end; gap: 16px; white-space: nowrap; }
```
